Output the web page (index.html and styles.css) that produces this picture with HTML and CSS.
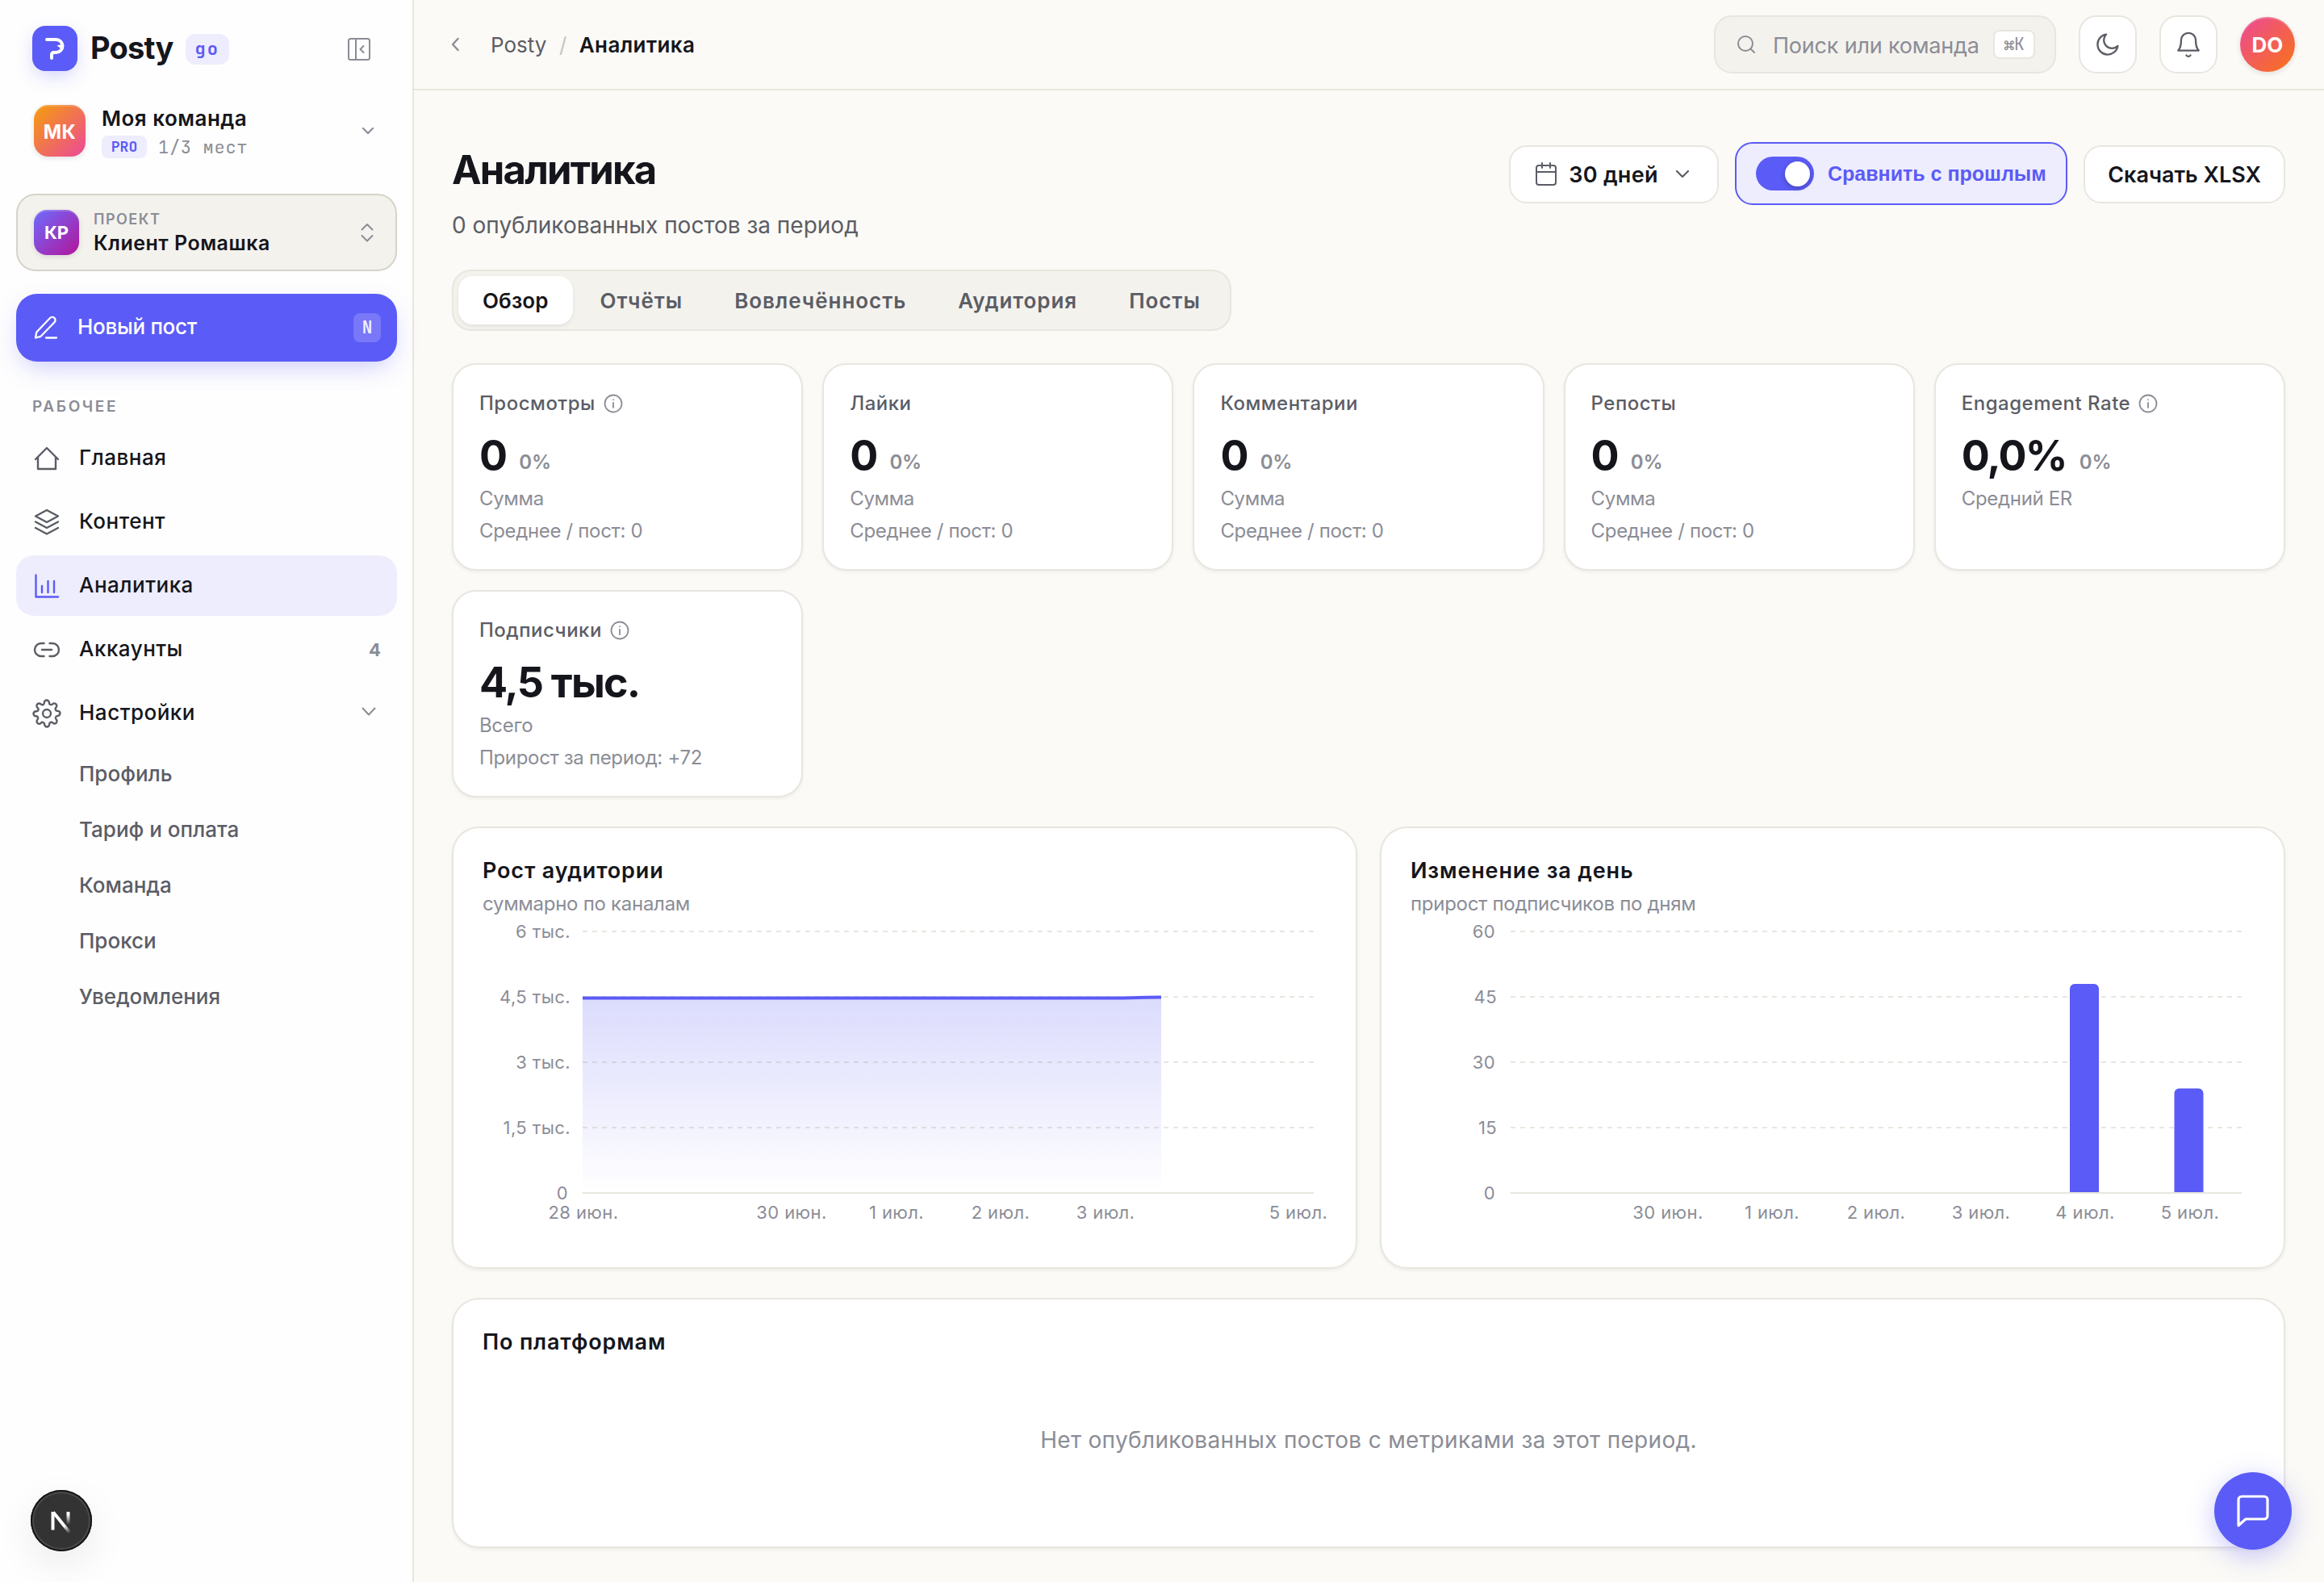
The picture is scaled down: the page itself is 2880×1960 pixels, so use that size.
FILE: index.html
```html
<!DOCTYPE html>
<html lang="ru">
<head>
    <meta charset="UTF-8">
    <meta name="viewport" content="width=device-width,initial-scale=1">
    <title>Posty — Аналитика</title>
    <link rel="stylesheet" href="styles.css">
</head>
<body>

<div class="app">
    <aside class="sidebar">
        <div class="brand">
            <span class="brand-logo">
                <svg width="56" height="56" viewBox="0 0 56 56" fill="none" stroke="#fff" stroke-width="4" stroke-linecap="round" stroke-linejoin="round">
                    <path d="M18 17h11.500a8 8 0 0 1 0 16H27q-3 0-3 3V40"/>
                    <path d="M30.500 24.500l7-2-1.500 6z" fill="#fff" stroke="none"/>
                </svg>
            </span>
            <span class="brand-name">Posty</span>
            <span class="brand-tag">go</span>
            <svg class="brand-collapse" width="30" height="30" viewBox="0 0 30 30" fill="none" stroke="currentColor" stroke-width="2" stroke-linecap="round" stroke-linejoin="round">
                <rect x="2" y="2" width="26" height="26" rx="2.500"/><path d="M11 2v26M20.500 11l-4 4 4 4"/>
            </svg>
        </div>

        <div class="team">
            <span class="avatar avatar-team">МК</span>
            <div class="team-info">
                <div class="team-name">Моя команда</div>
                <div class="team-meta"><span class="team-plan">PRO</span><span class="team-seats">1/3 мест</span></div>
            </div>
            <svg class="team-arrow" width="16" height="10" viewBox="0 0 16 10" fill="none" stroke="currentColor" stroke-width="2.200" stroke-linecap="round" stroke-linejoin="round"><path d="M2 2l6 6 6-6"/></svg>
        </div>

        <div class="project">
            <span class="avatar avatar-project">КР</span>
            <div class="project-info">
                <div class="project-label">ПРОЕКТ</div>
                <div class="project-name">Клиент Ромашка</div>
            </div>
            <svg class="project-arrow" width="16" height="26" viewBox="0 0 16 26" fill="none" stroke="currentColor" stroke-width="2" stroke-linecap="round" stroke-linejoin="round"><path d="M1.500 9.500L8 3l6.500 6.500M1.500 17L8 23.500l6.500-6.500"/></svg>
        </div>

        <a class="new-post">
            <svg width="32" height="32" viewBox="0 0 32 32" fill="none" stroke="currentColor" stroke-width="2.300" stroke-linecap="round" stroke-linejoin="round"><path d="M4 28.500l1.300-7L22 4a3.700 3.700 0 0 1 5.500 5.200L10.500 26.800zM17 28.500h13"/></svg>
            <span class="new-post-text">Новый пост</span>
            <span class="new-post-key">N</span>
        </a>

        <div class="nav-title">РАБОЧЕЕ</div>
        <nav class="nav">
            <a class="nav-item">
                <svg class="nav-icon" viewBox="0 0 36 36"><path d="M4 19L18 5l14 14M7 16.500V31h22V16.500"/></svg>
                <span class="nav-text">Главная</span>
            </a>
            <a class="nav-item">
                <svg class="nav-icon" viewBox="0 0 36 36"><path d="M18 3l14 7.500-14 7.500-14-7.500zM4 17.500l14 7.500 14-7.500M4 25l14 7.500L32 25"/></svg>
                <span class="nav-text">Контент</span>
            </a>
            <a class="nav-item nav-item-active">
                <svg class="nav-icon" viewBox="0 0 36 36"><path d="M4.500 4.500v27H32M12 26v-8M19.500 26V12M27 26V12"/></svg>
                <span class="nav-text">Аналитика</span>
            </a>
            <a class="nav-item">
                <svg class="nav-icon" viewBox="0 0 36 36"><path d="M14.500 10H11a8 8 0 0 0 0 16h3.500M21.500 10H25a8 8 0 0 1 0 16h-3.500M12 18h12"/></svg>
                <span class="nav-text">Аккаунты</span>
                <span class="nav-count">4</span>
            </a>
            <a class="nav-item">
                <svg class="nav-icon nav-icon-gear" viewBox="0 0 24 24"><circle cx="12" cy="12" r="3.300"/><path d="M19.400 15a1.650 1.650 0 0 0 .33 1.820l.06.06a2 2 0 1 1-2.830 2.830l-.06-.06a1.650 1.650 0 0 0-2.800 1.170V21a2 2 0 1 1-4 0v-.09a1.650 1.650 0 0 0-2.910-1.080l-.06.06a2 2 0 1 1-2.830-2.830l.06-.06a1.650 1.650 0 0 0-1.170-2.800H3a2 2 0 1 1 0-4h.09A1.650 1.650 0 0 0 4.270 7.180l-.06-.06a2 2 0 1 1 2.830-2.830l.06.06a1.650 1.650 0 0 0 2.800-1.170V3a2 2 0 1 1 4 0v.09a1.650 1.650 0 0 0 2.800 1.170l.06-.06a2 2 0 1 1 2.830 2.830l-.06.06a1.650 1.650 0 0 0 1.170 2.800H21a2 2 0 1 1 0 4h-.09a1.650 1.650 0 0 0-1.510 1.110z"/></svg>
                <span class="nav-text">Настройки</span>
                <svg class="nav-arrow" width="18" height="12" viewBox="0 0 18 12" fill="none" stroke="currentColor" stroke-width="2" stroke-linecap="round" stroke-linejoin="round"><path d="M1.500 1.500L9 9.500l7.500-8"/></svg>
            </a>
        </nav>
        <div class="subnav">
            <a>Профиль</a>
            <a>Тариф и оплата</a>
            <a>Команда</a>
            <a>Прокси</a>
            <a>Уведомления</a>
        </div>
    </aside>

    <div class="main">
        <header class="topbar">
            <svg class="back" width="12" height="18" viewBox="0 0 12 18" fill="none" stroke="currentColor" stroke-width="2.400" stroke-linecap="round" stroke-linejoin="round"><path d="M9.500 2L3 9l6.500 7"/></svg>
            <div class="crumbs"><span>Posty</span><span class="crumbs-sep">/</span><span class="crumbs-current">Аналитика</span></div>
            <div class="search">
                <svg width="24" height="24" viewBox="0 0 24 24" fill="none" stroke="currentColor" stroke-width="2" stroke-linecap="round"><circle cx="11" cy="11" r="9"/><path d="M17.500 17.500L22 22"/></svg>
                <span class="search-text">Поиск или команда</span>
                <kbd>⌘K</kbd>
            </div>
            <button class="icon-btn"><svg width="34" height="34" viewBox="0 0 24 24" fill="none" stroke="currentColor" stroke-width="1.600" stroke-linecap="round" stroke-linejoin="round"><path d="M20.800 13.300A8.900 8.900 0 1 1 10.700 3.200a7 7 0 0 0 10.100 10.100z"/></svg></button>
            <button class="icon-btn"><svg width="36" height="36" viewBox="0 0 24 24" fill="none" stroke="currentColor" stroke-width="1.500" stroke-linecap="round" stroke-linejoin="round"><path d="M6 8.500a6 6 0 0 1 12 0c0 6.500 2.500 8.500 2.500 8.500h-17S6 15 6 8.500M10.300 21a2 2 0 0 0 3.400 0"/></svg></button>
            <span class="avatar avatar-user">DO</span>
        </header>

        <main class="content">
            <div class="head">
                <div>
                    <h1>Аналитика</h1>
                    <p class="head-sub">0 опубликованных постов за период</p>
                </div>
                <div class="head-actions">
                    <button class="btn btn-period">
                        <svg width="28" height="30" viewBox="0 0 28 30" fill="none" stroke="#5b5d66" stroke-width="2" stroke-linecap="round" stroke-linejoin="round"><rect x="2" y="4" width="24" height="24" rx="3"/><path d="M2 12h24M9 1v6M19 1v6"/></svg>
                        <span>30 дней</span>
                        <svg class="btn-arrow" width="18" height="12" viewBox="0 0 18 12" fill="none" stroke="#5b5d66" stroke-width="2.200" stroke-linecap="round" stroke-linejoin="round"><path d="M2 2l7 7 7-7"/></svg>
                    </button>
                    <button class="compare"><span class="switch"><span class="switch-knob"></span></span><span>Сравнить с прошлым</span></button>
                    <button class="btn btn-export">Скачать XLSX</button>
                </div>
            </div>

            <div class="tabs">
                <a class="tab tab-active">Обзор</a>
                <a class="tab">Отчёты</a>
                <a class="tab">Вовлечённость</a>
                <a class="tab">Аудитория</a>
                <a class="tab">Посты</a>
            </div>

            <div class="stats">
                <div class="stat">
                    <div class="stat-label">Просмотры <svg class="info" viewBox="0 0 24 24"><circle cx="12" cy="12" r="10.500"/><path d="M12 11v6M12 7.200v.1"/></svg></div>
                    <div class="stat-value">0<span class="stat-delta">0%</span></div>
                    <div class="stat-note">Сумма</div>
                    <div class="stat-note">Среднее / пост: 0</div>
                </div>
                <div class="stat">
                    <div class="stat-label">Лайки</div>
                    <div class="stat-value">0<span class="stat-delta">0%</span></div>
                    <div class="stat-note">Сумма</div>
                    <div class="stat-note">Среднее / пост: 0</div>
                </div>
                <div class="stat">
                    <div class="stat-label">Комментарии</div>
                    <div class="stat-value">0<span class="stat-delta">0%</span></div>
                    <div class="stat-note">Сумма</div>
                    <div class="stat-note">Среднее / пост: 0</div>
                </div>
                <div class="stat">
                    <div class="stat-label">Репосты</div>
                    <div class="stat-value">0<span class="stat-delta">0%</span></div>
                    <div class="stat-note">Сумма</div>
                    <div class="stat-note">Среднее / пост: 0</div>
                </div>
                <div class="stat">
                    <div class="stat-label">Engagement Rate <svg class="info" viewBox="0 0 24 24"><circle cx="12" cy="12" r="10.500"/><path d="M12 11v6M12 7.200v.1"/></svg></div>
                    <div class="stat-value">0,0%<span class="stat-delta">0%</span></div>
                    <div class="stat-note">Средний ER</div>
                </div>
                <div class="stat">
                    <div class="stat-label">Подписчики <svg class="info" viewBox="0 0 24 24"><circle cx="12" cy="12" r="10.500"/><path d="M12 11v6M12 7.200v.1"/></svg></div>
                    <div class="stat-value">4,5 тыс.</div>
                    <div class="stat-note">Всего</div>
                    <div class="stat-note">Прирост за период: +72</div>
                </div>
            </div>

            <div class="charts">
                <section class="panel">
                    <h2>Рост аудитории</h2>
                    <p class="panel-sub">суммарно по каналам</p>
                    <svg class="chart" width="1044" height="400" viewBox="0 0 1044 400">
                        <defs>
                            <linearGradient id="area" x1="0" y1="0" x2="0" y2="1">
                                <stop offset="0" stop-color="#5b5bf7" stop-opacity=".22"/>
                                <stop offset="1" stop-color="#5b5bf7" stop-opacity="0"/>
                            </linearGradient>
                        </defs>
                        <path class="grid" d="M124 15h906M124 96h906M124 177h906M124 258h906"/>
                        <path class="axis" d="M124 339h906"/>
                        <path fill="url(#area)" d="M124 97.500H776C808 97.500 816 96.500 841 96.500V339H124z"/>
                        <path class="line" d="M124 97.500H776C808 97.500 816 96.500 841 96.500"/>
                        <g class="labels-y">
                            <text x="109" y="23">6 тыс.</text>
                            <text x="109" y="104">4,5 тыс.</text>
                            <text x="109" y="185">3 тыс.</text>
                            <text x="109" y="266">1,5 тыс.</text>
                            <text x="106" y="347">0</text>
                        </g>
                        <g class="labels-x">
                            <text x="125" y="371">28 июн.</text>
                            <text x="383" y="371">30 июн.</text>
                            <text x="513" y="371">1 июл.</text>
                            <text x="642" y="371">2 июл.</text>
                            <text x="772" y="371">3 июл.</text>
                            <text x="1011" y="371">5 июл.</text>
                        </g>
                    </svg>
                </section>
                <section class="panel">
                    <h2>Изменение за день</h2>
                    <p class="panel-sub">прирост подписчиков по дням</p>
                    <svg class="chart" width="1044" height="400" viewBox="0 0 1044 400">
                        <path class="grid" d="M124 15h906M124 96h906M124 177h906M124 258h906"/>
                        <path class="bar" d="M817 339V86a6 6 0 0 1 6-6h24a6 6 0 0 1 6 6v253zM946.500 339V215.500a6 6 0 0 1 6-6h24a6 6 0 0 1 6 6V339z"/>
                        <path class="axis" d="M124 339h906"/>
                        <g class="labels-y">
                            <text x="105" y="23">60</text>
                            <text x="107" y="104">45</text>
                            <text x="105" y="185">30</text>
                            <text x="107" y="266">15</text>
                            <text x="105" y="347">0</text>
                        </g>
                        <g class="labels-x">
                            <text x="319" y="371">30 июн.</text>
                            <text x="448" y="371">1 июл.</text>
                            <text x="577" y="371">2 июл.</text>
                            <text x="707" y="371">3 июл.</text>
                            <text x="836" y="371">4 июл.</text>
                            <text x="966" y="371">5 июл.</text>
                        </g>
                    </svg>
                </section>
            </div>

            <section class="panel panel-platforms">
                <h2>По платформам</h2>
                <p class="empty">Нет опубликованных постов с метриками за этот период.</p>
            </section>
        </main>
    </div>
</div>

<!-- floating buttons -->
<div class="dev-badge">
    <svg width="76" height="76" viewBox="0 0 76 76" fill="none" stroke-width="4">
        <defs>
            <linearGradient id="fade-bar" x1="0" y1="27" x2="0" y2="43" gradientUnits="userSpaceOnUse"><stop offset=".2" stop-color="#fff"/><stop offset="1" stop-color="#fff" stop-opacity="0"/></linearGradient>
            <linearGradient id="fade-leg" x1="42" y1="44" x2="49" y2="53" gradientUnits="userSpaceOnUse"><stop stop-color="#fff"/><stop offset="1" stop-color="#fff" stop-opacity="0"/></linearGradient>
        </defs>
        <path stroke="#fff" d="M27.500 49.500V27"/><path stroke="url(#fade-leg)" d="M28 27.500L49 53.500"/><path stroke="url(#fade-bar)" d="M46.500 27l.1 17"/>
    </svg>
</div>
<div class="chat">
    <svg width="48" height="48" viewBox="0 0 24 24" fill="none" stroke="#fff" stroke-width="1.600" stroke-linecap="round" stroke-linejoin="round"><path d="M21 15a2 2 0 0 1-2 2H7.500L3 21V5a2 2 0 0 1 2-2h14a2 2 0 0 1 2 2z"/></svg>
</div>

</body>
</html>
```
FILE: styles.css
```css
*{
    margin:0;
    padding:0;
    box-sizing:border-box;
}

body {
    font-family:Inter,"Liberation Sans",sans-serif;
    font-size:26px;
    color:#15161c;
    background:#fbfaf6;
}
button {
    font-family:inherit;
    color:inherit;
}
.app {
    display:flex;
    height:1960px;
    overflow:hidden;
}

/* sidebar */
.sidebar {
    width:513px;
    flex:none;
    padding:32px 19px 0 20px;
    background:#fefefe;
    border-right:2px solid #e8e6df;
}
.brand {
    display:flex;
    align-items:center;
    height:56px;
    padding-left:20px;
}
.brand-logo {
    width:56px;
    height:56px;
    border-radius:16px;
    background:#5b5bf7;
    box-shadow:0 8px 24px -4px rgba(91,91,247,.3);
}
.brand-name {
    margin-left:16px;
    font-size:38px;
    font-weight:700;
    letter-spacing:-.76px;
    line-height:54px;
    padding-bottom:3px;
}
.brand-tag {
    margin:2px 0 0 15px;
    width:54px;
    height:38px;
    border-radius:12px;
    background:#eeedfd;
    color:#5b5bf7;
    font:700 22px/38px "JetBrains Mono","Liberation Mono",monospace;
    letter-spacing:2px;
    text-align:center;
}
.brand-collapse {
    margin-left:auto;
    margin-right:32px;
    margin-top:2px;
    color:#8b8d96;
}
.avatar {
    flex:none;
    display:flex;
    align-items:center;
    justify-content:center;
    color:#fff;
    font-weight:700;
    box-shadow:0 2px 6px rgba(20,20,30,.12),inset 0 2px 0 rgba(255,255,255,.18);
}
.avatar-team {
    width:64px;
    height:64px;
    padding-top:2px;
    border-radius:18px;
    background:linear-gradient(135deg,#f59e0b,#ec4899);
    font-size:24px;
    letter-spacing:.5px;
}
.avatar-project {
    width:56px;
    height:56px;
    border-radius:16px;
    background:linear-gradient(135deg,#6d6cff,#b4149a);
    font-size:22px;
}
.avatar-user {
    width:68px;
    height:68px;
    border-radius:50%;
    background:linear-gradient(135deg,#ec4899,#f97316);
    font-size:26px;
}
.team {
    display:flex;
    align-items:center;
    height:64px;
    margin-top:42px;
    padding-left:22px;
}
.team-info {
    margin-left:20px;
    padding-top:2px;
}
.team-name {
    font-size:26px;
    font-weight:600;
    letter-spacing:.5px;
    line-height:34px;
}
.team-meta {
    display:flex;
    align-items:center;
    gap:14px;
    margin-top:4px;
    height:28px;
}
.team-plan {
    width:56px;
    height:28px;
    border-radius:8px;
    background:#eeedfd;
    color:#5b5bf7;
    font:700 18px/28px "JetBrains Mono","Liberation Mono",monospace;
    text-align:center;
}
.team-seats {
    color:#8b8d96;
    font:400 22px/28px "JetBrains Mono","Liberation Mono",monospace;
    letter-spacing:.7px;
    padding-top:2px;
}
.team-arrow {
    margin-left:auto;
    margin-right:28px;
    color:#8b8d96;
}
.project {
    display:flex;
    align-items:center;
    height:96px;
    margin-top:46px;
    padding-left:20px;
    border:2px solid #d6d4ca;
    border-radius:24px;
    background:#f4f2ed;
}
.project-info {
    margin-left:18px;
    padding-top:2px;
}
.project-label {
    color:#8b8d96;
    font-size:18px;
    font-weight:600;
    letter-spacing:1.5px;
    line-height:24px;
}
.project-name {
    font-size:25px;
    font-weight:600;
    letter-spacing:.5px;
    line-height:34px;
}
.project-arrow {
    margin-left:auto;
    margin-right:27px;
    color:#8b8d96;
}
.new-post {
    display:flex;
    align-items:center;
    height:84px;
    margin-top:28px;
    padding:0 20px;
    border-radius:26px;
    background:#5b5bf7;
    color:#fff;
    box-shadow:0 12px 32px -8px rgba(91,91,247,.35);
}
.new-post-text {
    margin-left:24px;
    padding-bottom:3px;
    font-size:26px;
    font-weight:500;
    letter-spacing:-.3px;
}
.new-post-key {
    margin-left:auto;
    width:34px;
    height:36px;
    border-radius:8px;
    background:rgba(255,255,255,.18);
    color:rgba(255,255,255,.9);
    font:700 21px/36px "JetBrains Mono","Liberation Mono",monospace;
    text-align:center;
}
.nav-title {
    margin-top:43px;
    padding-left:20px;
    color:#8b8d96;
    font-size:19px;
    font-weight:600;
    letter-spacing:2.6px;
    line-height:26px;
}
.nav {
    display:flex;
    flex-direction:column;
    gap:4px;
    margin-top:13px;
}
.nav-item {
    display:flex;
    align-items:center;
    gap:22px;
    height:75px;
    padding:0 20px;
    border-radius:22px;
    font-size:26px;
    font-weight:500;
}
.nav-item-active {
    background:#eeedfd;
}
.nav-icon {
    width:36px;
    height:36px;
    fill:none;
    stroke:#5b5d66;
    stroke-width:2.4;
    stroke-linecap:round;
    stroke-linejoin:round;
}
.nav-icon-gear {
    stroke-width:1.6;
}
.nav-item-active .nav-icon {
    stroke:#5b5bf7;
}
.nav-text {
    padding-bottom:2px;
    letter-spacing:.5px;
}
.nav-count {
    margin-left:auto;
    color:#8b8d96;
    font-size:22px;
    font-weight:700;
}
.nav-arrow {
    margin-left:auto;
    margin-right:6px;
    margin-bottom:3px;
    color:#8b8d96;
}
.subnav {
    display:flex;
    flex-direction:column;
    margin-top:3px;
    padding-left:78px;
    color:#5b5d66;
    font-weight:500;
    line-height:69px;
}

/* topbar */
.main {
    flex:1;
    min-width:0;
}
.topbar {
    display:flex;
    align-items:center;
    height:112px;
    padding:0 36px 0 45px;
    border-bottom:2px solid #e8e6df;
}
.back {
    color:#8b8d96;
}
.crumbs {
    display:flex;
    gap:15.5px;
    margin-left:38px;
    color:#5b5d66;
    font-size:26px;
}
.crumbs-sep {
    color:#c6c5be;
}
.crumbs-current {
    color:#15161c;
    font-weight:600;
    letter-spacing:.4px;
}
.search {
    display:flex;
    align-items:center;
    width:424px;
    height:72px;
    margin-left:auto;
    margin-right:28px;
    padding:0 24px 0 26px;
    border:2px solid #e8e6df;
    border-radius:22px;
    background:#f4f2ed;
    color:#8b8d96;
}
.search-text {
    margin-left:21px;
    padding-top:2px;
    font-size:27px;
    letter-spacing:-.2px;
    white-space:nowrap;
}
.search kbd {
    width:52px;
    height:36px;
    margin-left:auto;
    border:2px solid #e8e6df;
    border-radius:8px;
    background:#fff;
    font:400 21px/32px "JetBrains Mono","Liberation Mono",monospace;
    text-align:center;
}
.icon-btn {
    display:flex;
    align-items:center;
    justify-content:center;
    width:72px;
    height:72px;
    margin-right:28px;
    border:2px solid #e8e6df;
    border-radius:22px;
    background:#fff;
    color:#5b5d66;
}

/* page head */
.content {
    padding:64px 48px 0 47px;
}
.head {
    display:flex;
    justify-content:space-between;
    height:158px;
}
.head h1 {
    margin-top:5px;
    font-size:49px;
    font-weight:700;
    letter-spacing:-1.8px;
    line-height:60px;
}
.head-sub {
    margin-top:19px;
    color:#5b5d66;
    font-size:28px;
    line-height:38px;
}
.head-actions {
    display:flex;
    align-items:center;
    gap:20px;
    height:78px;
}
.btn {
    display:flex;
    align-items:center;
    justify-content:center;
    height:72px;
    margin-top:2px;
    border:2px solid #e8e6df;
    border-radius:22px;
    background:#fff;
    font-size:27px;
    font-weight:600;
    white-space:nowrap;
}
.btn-period {
    width:260px;
    gap:14px;
    padding-right:4px;
    letter-spacing:.3px;
}
.btn-arrow {
    margin-left:7px;
}
.btn-export {
    width:250px;
}
.compare {
    display:flex;
    align-items:center;
    gap:17px;
    width:412px;
    height:78px;
    padding-left:24px;
    border:2px solid #5b5bf7;
    border-radius:22px;
    background:#eeedfd;
    color:#5b5bf7;
    font:700 25px "Liberation Sans",Arial,sans-serif;
    white-space:nowrap;
}
.switch {
    display:flex;
    align-items:center;
    justify-content:flex-end;
    width:72px;
    height:42px;
    padding:0 5px;
    border-radius:21px;
    background:#5b5bf7;
}
.switch-knob {
    width:31px;
    height:31px;
    border-radius:50%;
    background:#fff;
    box-shadow:0 2px 6px rgba(0,0,0,.25);
}

/* tabs */
.tabs {
    display:inline-flex;
    gap:4px;
    height:76px;
    padding:6px;
    border:2px solid #e8e6df;
    border-radius:24px;
    background:#f4f2ed;
}
.tab {
    padding:0 30px;
    border-radius:18px;
    color:#5b5d66;
    font-size:26px;
    font-weight:600;
    letter-spacing:.95px;
    line-height:61px;
}
.tab-active {
    background:#fff;
    color:#15161c;
    letter-spacing:.1px;
    box-shadow:0 2px 4px rgba(20,20,30,.08);
}

/* stat cards */
.stats {
    display:grid;
    grid-template-columns:repeat(5,1fr);
    gap:24px;
    margin-top:40px;
}
.stat {
    height:257px;
    padding:29px 32px;
    border:2px solid #e8e6df;
    border-radius:30px;
    background:#fff;
    box-shadow:0 2px 4px rgba(20,20,30,.05);
}
.stat-label {
    display:flex;
    align-items:center;
    gap:10px;
    color:#5b5d66;
    font-size:24px;
    font-weight:500;
    letter-spacing:.5px;
    line-height:38px;
}
.info {
    width:24px;
    height:24px;
    fill:none;
    stroke:#8b8d96;
    stroke-width:1.8;
    stroke-linecap:round;
}
.stat-value {
    display:flex;
    align-items:flex-end;
    margin-top:13px;
    height:66px;
    font-size:52px;
    font-weight:700;
    letter-spacing:-1.8px;
    line-height:66px;
}
.stat-delta {
    margin-left:16px;
    color:#8b8d96;
    font-size:24px;
    font-weight:600;
    letter-spacing:-.2px;
    line-height:51px;
}
.stat-note {
    color:#8b8d96;
    font-size:24px;
    letter-spacing:-.33px;
    line-height:39.5px;
}

/* charts */
.charts {
    display:grid;
    grid-template-columns:repeat(2,minmax(0,1fr));
    gap:28px;
    margin-top:36px;
}
.panel {
    height:548px;
    padding:35px 36px;
    border:2px solid #e8e6df;
    border-radius:34px;
    background:#fff;
    box-shadow:0 2px 4px rgba(20,20,30,.06);
}
.panel h2 {
    font-size:27px;
    font-weight:600;
    letter-spacing:.85px;
    line-height:36px;
}
.panel-sub {
    margin-top:5px;
    color:#8b8d96;
    font-size:24px;
    letter-spacing:-.28px;
    line-height:36px;
}
/* the last date sticks out past the plot area */
.chart {
    display:block;
    margin-top:1px;
    overflow:visible;
}
.grid {
    fill:none;
    stroke:#e8e6df;
    stroke-width:2;
    stroke-dasharray:6 6;
}
.axis {
    stroke:#e8e6df;
    stroke-width:2;
}
.line {
    fill:none;
    stroke:#5b5bf7;
    stroke-width:4;
}
.bar {
    fill:#5b5bf7;
}
.chart text {
    fill:#8b8d96;
    font-size:22px;
    letter-spacing:.4px;
}
.labels-y {
    text-anchor:end;
}
.labels-x {
    text-anchor:middle;
}
.panel-platforms {
    height:310px;
    margin-top:36px;
}
.empty {
    margin-top:83px;
    color:#8b8d96;
    font-size:28px;
    letter-spacing:.33px;
    line-height:40px;
    text-align:center;
}

/* floating buttons */
.dev-badge {
    position:fixed;
    left:38px;
    bottom:38px;
    width:76px;
    height:76px;
    border-radius:50%;
    background:#333;
    box-shadow:inset 0 0 0 2px #171717,inset 0 0 0 4px #4a4a4a,0 16px 48px rgba(0,0,0,.08);
}
.chat {
    position:fixed;
    right:40px;
    bottom:40px;
    display:flex;
    align-items:center;
    justify-content:center;
    width:96px;
    height:96px;
    border-radius:50%;
    background:#5b5bf7;
    box-shadow:0 8px 32px rgba(91,91,247,.35);
}
```
